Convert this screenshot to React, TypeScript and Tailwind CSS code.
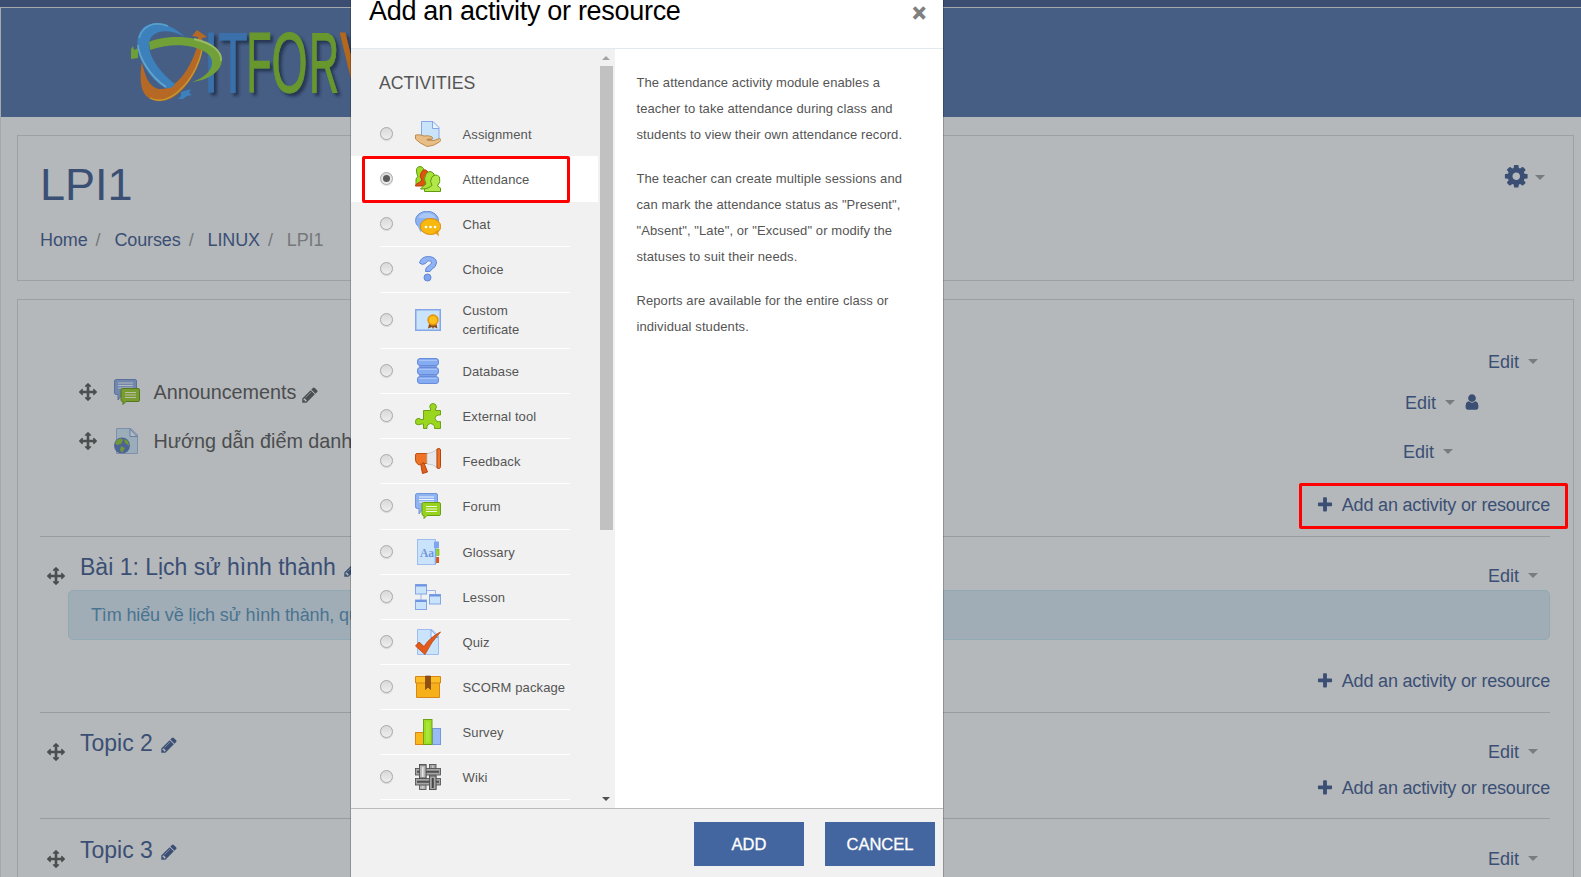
import type { ReactNode } from "react";

const PATHS = {
  pencil:
    "M491 1536l91-91-235-235-91 91v107h128v128h107zM1014 608q0-22-22-22-10 0-17 7l-542 542q-7 7-7 17 0 22 22 22 10 0 17-7l542-542q7-7 7-17zM960 416l416 416-832 832h-416v-416zM1643 512q0 53-37 90l-166 166-416-416 166-165q36-38 90-38 53 0 91 38l235 234q37 39 37 91z",
  arrows:
    "M1792 896q0 26-19 45l-256 256q-19 19-45 19t-45-19-19-45v-128h-384v384h128q26 0 45 19t19 45-19 45l-256 256q-19 19-45 19t-45-19l-256-256q-19-19-19-45t19-45 45-19h128v-384h-384v128q0 26-19 45t-45 19-45-19l-256-256q-19-19-19-45t19-45l256-256q19-19 45-19t45 19 19 45v128h384v-384h-128q-26 0-45-19t-19-45 19-45l256-256q19-19 45-19t45 19l256 256q19 19 19 45t-19 45-45 19h-128v384h384v-128q0-26 19-45t45-19 45 19l256 256q19 19 19 45z",
  cog: "M1152 896q0-106-75-181t-181-75-181 75-75 181 75 181 181 75 181-75 75-181zm512-109v222q0 12-8 23t-20 13l-185 28q-19 54-39 91 35 50 107 138 10 12 10 25t-9 23q-27 37-99 108t-94 71q-12 0-26-9l-138-108q-44 23-91 38-16 136-29 186-7 28-36 28h-222q-14 0-24.5-8.5t-11.5-21.5l-28-184q-49-16-90-37l-141 107q-10 9-25 9-14 0-25-11-126-114-165-168-7-10-7-23 0-12 8-23 15-21 51-66.5t54-70.5q-27-50-41-99l-183-27q-13-2-21-12.5t-8-23.5v-222q0-12 8-23t19-13l186-28q14-46 39-92-40-57-107-138-10-12-10-24 0-10 9-23 26-36 98.5-107.5t94.5-71.5q13 0 26 10l138 107q44-23 91-38 16-136 29-186 7-28 36-28h222q14 0 24.5 8.5t11.5 21.5l28 184q49 16 90 37l142-107q9-9 24-9 13 0 25 10 129 119 165 170 7 8 7 22 0 12-8 23-15 21-51 66.5t-54 70.5q26 50 41 98l183 28q13 2 21 12.5t8 23.5z",
  plus: "M1600 736v192q0 40-28 68t-68 28h-416v416q0 40-28 68t-68 28h-192q-40 0-68-28t-28-68v-416h-416q-40 0-68-28t-28-68v-192q0-40 28-68t68-28h416v-416q0-40 28-68t68-28h192q40 0 68 28t28 68v416h416q40 0 68 28t28 68z",
  user: "M1536 1399q0 109-62.5 187t-150.5 78h-854q-88 0-150.5-78t-62.5-187q0-85 8.5-160.5t31.5-152 58.5-131 94-89 134.5-34.5q131 128 313 128t313-128q76 0 134.5 34.5t94 89 58.5 131 31.5 152 8.5 160.5zm-256-887q0 159-112.5 271.5t-271.5 112.5-271.5-112.5-112.5-271.5 112.5-271.5 271.5-112.5 271.5 112.5 112.5 271.5z",
};

function Fa({ name, className = "" }: { name: keyof typeof PATHS; className?: string }) {
  return (
    <svg viewBox="0 0 1792 1792" fill="currentColor" className={`shrink-0 ${className}`}>
      <path d={PATHS[name]} />
    </svg>
  );
}

function Caret({ className = "" }: { className?: string }) {
  return (
    <svg viewBox="0 0 10 5" className={`h-[5px] w-[10px] shrink-0 fill-[#787c7f] ${className}`}>
      <path d="M0 0H10L5 5Z" />
    </svg>
  );
}

function Edit({ className = "", children }: { className?: string; children?: ReactNode }) {
  return (
    <div className={`flex h-6 items-start text-[18px] leading-6 text-[#3b4f75] ${className}`}>
      <span>Edit</span>
      <Caret className="mt-[9px] ml-[9px]" />
      {children}
    </div>
  );
}

function AddLink({ className = "", children }: { className?: string; children?: ReactNode }) {
  return (
    <div className={`flex justify-end ${className}`}>
      <div className="relative flex h-6 text-[18px] leading-6 text-[#3b4f75]">
        <Fa name="plus" className="mt-[3px] mr-2 size-[18px]" />
        <span className="tracking-[-0.18px]">Add an activity or resource</span>
        {children}
      </div>
    </div>
  );
}

function Logo() {
  return (
    <svg viewBox="131 14 240 94" className="h-[94px] w-[240px]">
      <defs>
        <filter id="ls" x="-10%" y="-10%" width="130%" height="130%">
          <feDropShadow dx="3" dy="3" stdDeviation="1.6" floodColor="#1d2a40" floodOpacity="0.75" />
        </filter>
      </defs>
      <g filter="url(#ls)" fontFamily="Liberation Sans" fontSize="86" strokeWidth="1.2">
        <g fill="#3a70aa" stroke="#3a70aa">
          <text x="203.500" y="91.500" textLength="15" lengthAdjust="spacingAndGlyphs">I</text>
          <text x="218.500" y="91.500" textLength="29" lengthAdjust="spacingAndGlyphs">T</text>
        </g>
        <g fill="#67972f" stroke="#67972f">
          <text x="246.500" y="91.500" textLength="25" lengthAdjust="spacingAndGlyphs">F</text>
          <text x="271.500" y="91.500" textLength="36" lengthAdjust="spacingAndGlyphs">O</text>
          <text x="309" y="91.500" textLength="30" lengthAdjust="spacingAndGlyphs">R</text>
        </g>
        <text x="340" y="91.500" textLength="34" lengthAdjust="spacingAndGlyphs" fill="#b3681f" stroke="#b3681f">V</text>
      </g>
      <path d="M131 59V49L133 46L134 50L138 48V58Z" fill="#6d9e38" />
      <path d="M142 62C145 76 149 88 160 89C175 90 190 70 197 47L198 37L192 36L197 30L207 37L202 38C206 58 190 86 175 96C165 104 148 103 143 91C140 84 140 72 142 62Z" fill="#b56924" />
      <path d="M150 98C160 103 172 99 184 86C194 75 200 60 202 50" fill="none" stroke="#c59a30" strokeWidth="1.300" />
      <path d="M185 37C172 24 155 19 144 27C133 37 137 56 146 69C151 77 158 84 165 88C170 89 174 87 175 84C162 74 149 58 149 45C149 30 168 27 185 37Z" fill="#3c80bc" />
      <path d="M181 92L191 89L189 93L192 95L187 96L183 99L178 99L181 96Z" fill="#3c80bc" />
      <path d="M138 45C139 58 150 76 166 87" fill="none" stroke="#66a6cc" strokeWidth="1.600" />
      <path d="M139 38C143 25 155 21 168 26" fill="none" stroke="#5a9fcc" strokeWidth="1.600" />
      <path d="M149 42C165 35 195 35 211 45C223 52 225 63 217 71C210 78 201 81 192 82C203 78 211 72 212 64C213 55 204 50 193 47C180 44 164 45 150 50Z" fill="#70a037" />
      <path d="M194 39C212 43 222 51 221 61" fill="none" stroke="#9aba66" strokeWidth="1.800" />
    </svg>
  );
}

const L = "#c9e4fa";
const B = "#84a7e8";

const Doc = () => (
  <>
    <path d="M2.500 .5H17L23.500 7V25.500H2.500Z" fill={L} stroke="#9fbcf0" />
    <path d="M16 1L16 8.500H23Z" fill="#eaf5ff" stroke={B} />
  </>
);

const ForumArt = () => (
  <>
    <path d="M2.500 .5H21Q22.500 .5 22.500 2V14Q22.500 15.500 21 15.500H8L4 21V15.500H2.500Q.5 15.500 .5 14V2Q.5 .5 2.500 .5Z" fill="#8fb2f0" stroke="#6f95dc" />
    <path d="M4 4H19M4 6.500H19M4 9H19" stroke="#eef5ff" />
    <path d="M8.500 9.500H24Q25.500 9.500 25.500 11V21Q25.500 22.500 24 22.500H12L9 25.500V22.500Q7 22.500 7 21V11Q7 9.500 8.500 9.500Z" fill="#97d21f" stroke="#6ba012" />
    <path d="M11 13.500H22M11 16H22M11 18.500H22" stroke="#f2fadc" />
  </>
);

const ART: Record<string, ReactNode> = {
  Assignment: (
    <>
      <path d="M6.500 .5H18L24 6.500V20H6.500Z" fill={L} stroke="#86a8e8" />
      <path d="M17.500 1V7.500H24" fill="#eaf5ff" stroke={B} />
      <path d="M.5 14Q5 13 9 15Q14 14 17 16Q19 17.500 16 18.500L12 19L19 19.500L24.500 17.500Q27 18 24.500 21Q18 25.500 12 25.500Q4 22 .5 18Z" fill="#e8bd86" stroke="#b98447" strokeWidth=".9" />
      <path d="M11 18.500Q14 16.500 18 18.500Z" fill="#b98447" />
    </>
  ),
  Attendance: (
    <>
      <path d="M1 13Q4 11 2 8Q0 1 5 .5Q10 1 8.500 7Q7 11 12 12V19H1Z" fill="#9fdc28" stroke="#5f9a12" />
      <path d="M.5 19Q5 16 7 14Q4 11 6 7Q9 1 13 6Q15 11 12 14L14 20H.5Z" fill="#e0520f" stroke="#b83f0b" />
      <path d="M5.500 23Q8 20 11 18Q8 13 11 8Q15 3 19 8Q21 13 17 17L22 23Z" fill="#a8e234" stroke="#5f9a12" />
      <path d="M9.500 25.500V23Q14 22 17 19.500Q14 15 17 11Q21 7 24.500 11Q26 16 22.500 20L25.500 22V25.500Z" fill="#b3e84b" stroke="#5f9a12" />
    </>
  ),
  Chat: (
    <>
      <ellipse cx="12" cy="9.500" rx="11.500" ry="9.300" fill="#8db2f2" stroke="#6a8fdc" />
      <path d="M2 14L5.500 21Q8 20 8 17Z" fill="#8db2f2" />
      <path d="M3 7Q6 2 12 2Q18 2 21 7Z" fill="#abc7f6" />
      <ellipse cx="15.500" cy="15.500" rx="10.200" ry="8" fill="#f9b80e" stroke="#d98a10" />
      <path d="M19 21L24 25.500L23 19Z" fill="#e99b10" />
      <circle cx="11" cy="16" r="1.300" fill="#fff" /><circle cx="15.500" cy="16" r="1.300" fill="#fff" /><circle cx="20" cy="16" r="1.300" fill="#fff" />
    </>
  ),
  Choice: (
    <>
      <path d="M4.500 7Q6 .5 13.500 .5Q21.500 1 21.500 7Q21 11 17 13L15 15.500H10.500Q10 11.500 14 9.500Q18 7 15.500 5Q12.500 3.500 10.500 7.500Q7 9.500 4.500 7Z" fill="#8fb3f5" stroke="#6186d6" />
      <circle cx="12.500" cy="21.500" r="3.500" fill="#7fa5ee" stroke="#6186d6" />
    </>
  ),
  "Custom certificate": (
    <>
      <rect x=".75" y="2.750" width="24.500" height="20.500" fill={L} stroke={B} strokeWidth="1.500" />
      <path d="M14.500 15L13 21.500L17 20L18 22L19 20L22.500 21.500L21 15Z" fill="#8a4a18" />
      <circle cx="18" cy="13" r="5.700" fill="#e79210" /><circle cx="18" cy="13" r="4" fill="#fbc01a" />
    </>
  ),
  Database: (
    <>
      {[0.5, 9.5, 18.5].map((y) => (
        <g key={y}>
          <rect x="2.500" y={y} width="21" height="7" rx="2.500" fill="#85abf0" stroke="#678cdc" />
          <path d={`M4 ${y + 2}H22`} stroke="#a8c4f6" />
        </g>
      ))}
      <path d="M4 8.500H22M4 17.500H22" stroke="#7c9fe4" />
    </>
  ),
  "External tool": (
    <path
      d="M8.500 7.500H15.500V6Q14 3.500 15.500 1.500Q18 -.5 20.500 1.500Q22.500 4 20.500 6V7.500H25.500V12Q23.500 11.500 21 13Q19 15.500 21 17.500Q23 19.500 25.500 18.500V25.500H19.500V23.500Q18.500 20.500 15.500 20.500Q12.500 21 12 23.500V25.500H8.500V21H6.500Q3.500 22.500 1 21Q-.5 18 1.500 16Q4 14.500 6 16.500H8.500Z"
      fill="#9bd61f"
      stroke="#6da313"
    />
  ),
  Feedback: (
    <>
      <path d="M5.500 15H9L12.500 24L7.500 25.500Z" fill="#e2611b" stroke="#b5440c" />
      <path d="M2 5.500H13V15.500H9Q8 12.500 7 16H6L4 17Q.5 15 .5 12V7Q.5 5.500 2 5.500Z" fill="#ee7327" stroke="#c04f10" />
      <path d="M12 5.500Q18 5 22 1.500V19.500Q18 16 12 16Z" fill="#e6e8ea" stroke="#b9bcc0" strokeWidth=".7" />
      <path d="M22 1Q25.500 -.5 25.500 2V18.500Q25.500 21.500 22 20Z" fill="#ee7327" stroke="#b5440c" />
    </>
  ),
  Forum: <ForumArt />,
  Glossary: (
    <>
      <rect x="2.500" y=".5" width="18" height="25" fill={L} stroke="#9fbcf0" />
      <path d="M19 2.500H24V9H19Z" fill="#7fa5ee" /><path d="M20.500 10H24V16.500H20.500Z" fill="#9bd61f" stroke="#76a818" strokeWidth=".6" /><path d="M20.500 18H24V24H20.500Z" fill="#e2540f" />
      <path d="M20.500 3V25" stroke="#7fa5ee" strokeWidth="1.500" />
      <text x="5" y="18" fontSize="11.500" fontWeight="bold" fontFamily="Liberation Serif" fill="#6f95dc">Aa</text>
    </>
  ),
  Lesson: (
    <>
      <path d="M11 6.500H20.500V11M6 10V16" fill="none" stroke="#9ab7ea" />
      {[[0.5, 0.5], [14.5, 10.5], [0.5, 16.0]].map(([x, y]) => (
        <g key={`${x}-${y}`}>
          <rect x={x} y={y} width="11" height="9.500" fill={L} stroke={B} />
          <path d={`M${x} ${y + 1}H${x + 11}`} stroke="#6f95e2" strokeWidth="2" />
        </g>
      ))}
    </>
  ),
  Quiz: (
    <>
      <Doc />
      <path d="M.5 17L4 13L9 17.500Q15 8 25.500 3Q16 13 10 25.500Z" fill="#e5591b" stroke="#b5440c" strokeWidth=".8" />
    </>
  ),
  "SCORM package": (
    <>
      <path d="M1.500 7H24.500V23.500H1.500Z" fill="#f6b01a" stroke="#d98618" />
      <path d="M.5 2.500H25.500V9H.5Z" fill="#fbbd25" stroke="#d98618" />
      <path d="M10.500 2H15.500V15.500L13 13L10.500 15.500Z" fill="#8f4f14" stroke="#6f390a" strokeWidth=".6" />
    </>
  ),
  Survey: (
    <>
      <rect x=".5" y="13.500" width="8" height="12" fill="#fbb81a" stroke="#d98618" />
      <rect x="17.500" y="9.500" width="8" height="16" fill="#9abcf6" stroke="#7397e0" />
      <rect x="8.500" y=".5" width="8.500" height="25" fill="#9cdc22" stroke="#6da313" />
      <path d="M11 3H14.500V23H11Z" fill="#a9e63c" />
    </>
  ),
  Wiki: (
    <g stroke="#4a4a4a" strokeWidth=".8">
      <rect x="4.500" y=".5" width="6.500" height="25" fill="#b4b4b4" /><rect x="14.500" y=".5" width="6.500" height="25" fill="#a0a0a0" />
      <rect x=".5" y="4.500" width="25" height="6.500" fill="#a5a5a5" /><rect x=".5" y="14.500" width="25" height="6.500" fill="#a5a5a5" />
      <path d="M2 7.750H24M2 17.750H24" stroke="#505050" strokeWidth="2" />
      <rect x="4.500" y="1" width="6.500" height="13" fill="#b5b5b5" /><rect x="14.500" y="12" width="6.500" height="13.500" fill="#a5a5a5" />
      <path d="M7.750 3V13" stroke="#e4e4e4" strokeWidth="1.500" /><path d="M17.750 14V24" stroke="#444" strokeWidth="2" />
      <path d="M7.750 22V24.500M17.750 1.500V4" stroke="#e4e4e4" />
    </g>
  ),
};

function Art({ children, className = "" }: { children: ReactNode; className?: string }) {
  return <svg viewBox="0 0 26 26" className={`size-[26px] shrink-0 ${className}`}>{children}</svg>;
}

const ROWS: [string, string][] = [
  ["Assignment", "h-[45px] pt-px border-transparent"],
  ["Attendance", "h-[46px] pt-px border-transparent"],
  ["Chat", "h-[45px] border-white"],
  ["Choice", "h-[46px] border-white"],
  ["Custom certificate", "h-[56px] pt-[5px] border-white"],
  ["Database", "h-[45px] border-white"],
  ["External tool", "h-[45px] border-white"],
  ["Feedback", "h-[45px] border-white"],
  ["Forum", "h-[46px] border-white"],
  ["Glossary", "h-[45px] border-white"],
  ["Lesson", "h-[45px] border-white"],
  ["Quiz", "h-[45px] border-white"],
  ["SCORM package", "h-[45px] border-white"],
  ["Survey", "h-[45px] border-white"],
  ["Wiki", "h-[45px] border-white"],
];

function Row({ name, box }: { name: string; box: string }) {
  const on = name === "Attendance";
  return (
    <div className={`relative pl-[29px] ${on ? "bg-white" : ""}`}>
      <div className={`flex w-[190px] items-start border-b ${box}`}>
        <span className="mt-[15px] flex size-[13px] shrink-0 items-center justify-center rounded-full border border-[#a9a9a9] bg-linear-to-b from-[#d9d9d9] to-[#eeeeee] shadow-[0_1px_1px_rgba(0,0,0,0.12)]">
          {on && <span className="size-[7px] rounded-full bg-[#5a5a5a]" />}
        </span>
        <Art className="mt-[9px] ml-[22px]">{ART[name]}</Art>
        <span className={`ml-[21.500px] text-[13px] leading-[19px] tracking-[0.12px] text-[#555] ${name === "Custom certificate" ? "mt-[3px] w-[80px]" : "mt-[13px] whitespace-nowrap"}`}>{name}</span>
      </div>
      {on && <span className="absolute top-0 left-[11px] h-[47px] w-[208px] rounded-[2px] border-[3px] border-[#f00]" />}
    </div>
  );
}

function Modal() {
  return (
    <div className="absolute top-0 left-[350px] flex h-[877px] w-[594px] flex-col border-x border-black/20 bg-white bg-clip-padding">
      <div className="flex h-[49px] shrink-0 justify-between border-b border-[#e3e8ed] pr-[17px] pl-[18px]">
        <h2 className="-mt-[5px] h-8 text-[27px] leading-8 tracking-[-0.3px] text-black">Add an activity or resource</h2>
        <span className="mt-px h-6 text-[23px] leading-6 font-bold text-[#7f7f7f] [-webkit-text-stroke:1px_#7f7f7f]">×</span>
      </div>
      <div className="flex h-[759px] shrink-0">
        <div className="flex w-[264px] bg-[#f1f1f1]">
          <div className="w-[247px]">
            <h3 className="h-[62px] pt-[22px] pl-[28px] text-[17.700px] leading-6 text-[#555]">ACTIVITIES</h3>
            {ROWS.map(([name, box]) => (
              <Row key={name} name={name} box={box} />
            ))}
          </div>
          <div className="flex w-[17px] flex-col items-center pr-px">
            <svg viewBox="0 0 8 4" className="mt-[7px] h-[4px] w-[8px] fill-[#a3a3a3]"><path d="M0 4L4 0L8 4Z" /></svg>
            <div className="mt-[6px] h-[464px] w-[13px] bg-[#c1c1c1]" />
            <svg viewBox="0 0 8 4" className="mt-auto mb-[7px] h-[4px] w-[8px] fill-[#505050]"><path d="M0 0H8L4 4Z" /></svg>
          </div>
        </div>
        <div className="flex flex-1 flex-col gap-[18px] pt-[21px] pl-[21.500px] text-[13px] leading-[26px] tracking-[0.09px] whitespace-nowrap text-[#555]">
          <p>The attendance activity module enables a<br />teacher to take attendance during class and<br />students to view their own attendance record.</p>
          <p>The teacher can create multiple sessions and<br />can mark the attendance status as "Present",<br />"Absent", "Late", or "Excused" or modify the<br />statuses to suit their needs.</p>
          <p>Reports are available for the entire class or<br />individual students.</p>
        </div>
      </div>
      <div className="flex flex-1 justify-end gap-[21px] border-t border-[#b9b9b9] bg-[#f1f1f1] pt-[13px] pr-[8px]">
        <button className="h-[44px] w-[110px] bg-[#4466a0] text-[16.500px] text-white [-webkit-text-stroke:0.3px_#fff]">ADD</button>
        <button className="h-[44px] w-[110px] bg-[#4466a0] text-[16.500px] text-white [-webkit-text-stroke:0.3px_#fff]">CANCEL</button>
      </div>
    </div>
  );
}

function Section({ title, children, className = "" }: { title: string; children?: ReactNode; className?: string }) {
  return (
    <section className={`border-b border-[#989c9e] ${className}`}>
      <div className="flex h-[51px]">
        <Fa name="arrows" className="mt-[29.500px] ml-[7px] size-[18px] text-[#4b4d4f]" />
        <h3 className="mt-[18px] ml-[15px] h-6 text-[23px] leading-6 whitespace-nowrap text-[#3b4f75]">{title}</h3>
        <Fa name="pencil" className="mt-[23px] ml-[7px] size-[18px] text-[#3b4f75]" />
        <Edit className="mt-[27px] mr-[12px] ml-auto" />
      </div>
      {children}
    </section>
  );
}

export default function App() {
  return (
    <div className="relative h-[877px] w-[1581px] overflow-hidden bg-[#b4b8ba] font-['Liberation_Sans',Arial,sans-serif]">
      <div className="h-[7px] bg-[#3b4e71]" />
      <div className="h-[870px] border-t border-l border-[#a4a9ac]">
        <header className="h-[109px] bg-[#465e84] pt-[6px] pl-[130px]">
          <Logo />
        </header>
        <div className="pt-[18px] pr-[7px] pl-[16px]">
          <div className="flex h-[146px] justify-between border border-[#9ea1a3] pt-[22px] pr-[28px] pl-[22px]">
            <div>
              <h1 className="h-[54px] text-[45px] leading-[54px] text-[#3b4f75]">LPI1</h1>
              <nav className="mt-[16px] flex text-[18px] leading-6 tracking-[-0.12px] text-[#3b4f75]">
                <span>Home</span><span className="mr-[14px] ml-[8px] text-[#75797c]">/</span>
                <span>Courses</span><span className="mr-[14px] ml-[8px] text-[#75797c]">/</span>
                <span>LINUX</span><span className="mr-[14px] ml-[8px] text-[#75797c]">/</span>
                <span className="text-[#75797c]">LPI1</span>
              </nav>
            </div>
            <div className="flex text-[#3b4f75]">
              <Fa name="cog" className="mt-[4.500px] size-[26.500px]" />
              <Caret className="mt-[17px] ml-[6px]" />
            </div>
          </div>
          <main className="mt-[18px] h-[600px] border border-[#9ea1a3] pr-[23px] pl-[22px]">
            <section className="h-[237px] border-b border-[#989c9e] pt-[50px]">
              <div className="flex justify-end pr-[12px]"><Edit /></div>
              <div className="flex h-[49px] pr-[69px] text-[19.800px] leading-6 text-[#4b4d4f]">
                <Fa name="arrows" className="mt-[8.500px] ml-[39px] size-[18px]" />
                <Art className="mt-[5px] ml-[17px] brightness-[.76] saturate-[.8]"><ForumArt /></Art>
                <span className="mt-[6px] ml-[13.500px]">Announcements</span>
                <Fa name="pencil" className="mt-[11.500px] ml-[5px] size-[18px]" />
                <Edit className="mt-[17px] ml-auto"><Fa name="user" className="mt-[2px] ml-[8px] size-[18px]" /></Edit>
              </div>
              <div className="flex h-[49px] pr-[97px] text-[19.800px] leading-6 text-[#4b4d4f]">
                <Fa name="arrows" className="mt-[8.500px] ml-[39px] size-[18px]" />
                <Art className="mt-[5px] ml-[17px] brightness-[.76] saturate-[.8]">
                  <Doc />
                  <circle cx="8" cy="17.500" r="8" fill="#5d84d4" />
                  <path d="M3 12Q7 9 9 12L7 16L3 17L1 15ZM10 11L14 13L15 18L11 15ZM7 18L11 20L8 25L6 22Z" fill="#8fcb2a" />
                </Art>
                <span className="mt-[6px] ml-[13.500px] whitespace-nowrap">Hướng dẫn điểm danh</span>
                <Edit className="mt-[17px] ml-auto" />
              </div>
              <AddLink className="mt-[21px]">
                <span className="absolute -top-[10px] -left-[17px] h-[46px] w-[269px] rounded-[2px] border-[3px] border-[#f00]" />
              </AddLink>
            </section>
            <Section title="Bài 1: Lịch sử hình thành" className="h-[176px]">
              <div className="mt-[2px] ml-[28px] h-[50px] rounded-[5px] border border-[#91a9b2] bg-[#a0adb6] pt-[12px] pl-[22px] text-[18px] leading-6 tracking-[-0.13px] text-[#4a7390]">
                Tìm hiểu về lịch sử hình thành, quá trình phát triển
              </div>
              <AddLink className="mt-[29px]" />
            </Section>
            <Section title="Topic 2" className="h-[106px]">
              <AddLink className="mt-[12px]" />
            </Section>
            <Section title="Topic 3" className="h-[106px] pt-px" />
          </main>
        </div>
      </div>
      <Modal />
    </div>
  );
}
